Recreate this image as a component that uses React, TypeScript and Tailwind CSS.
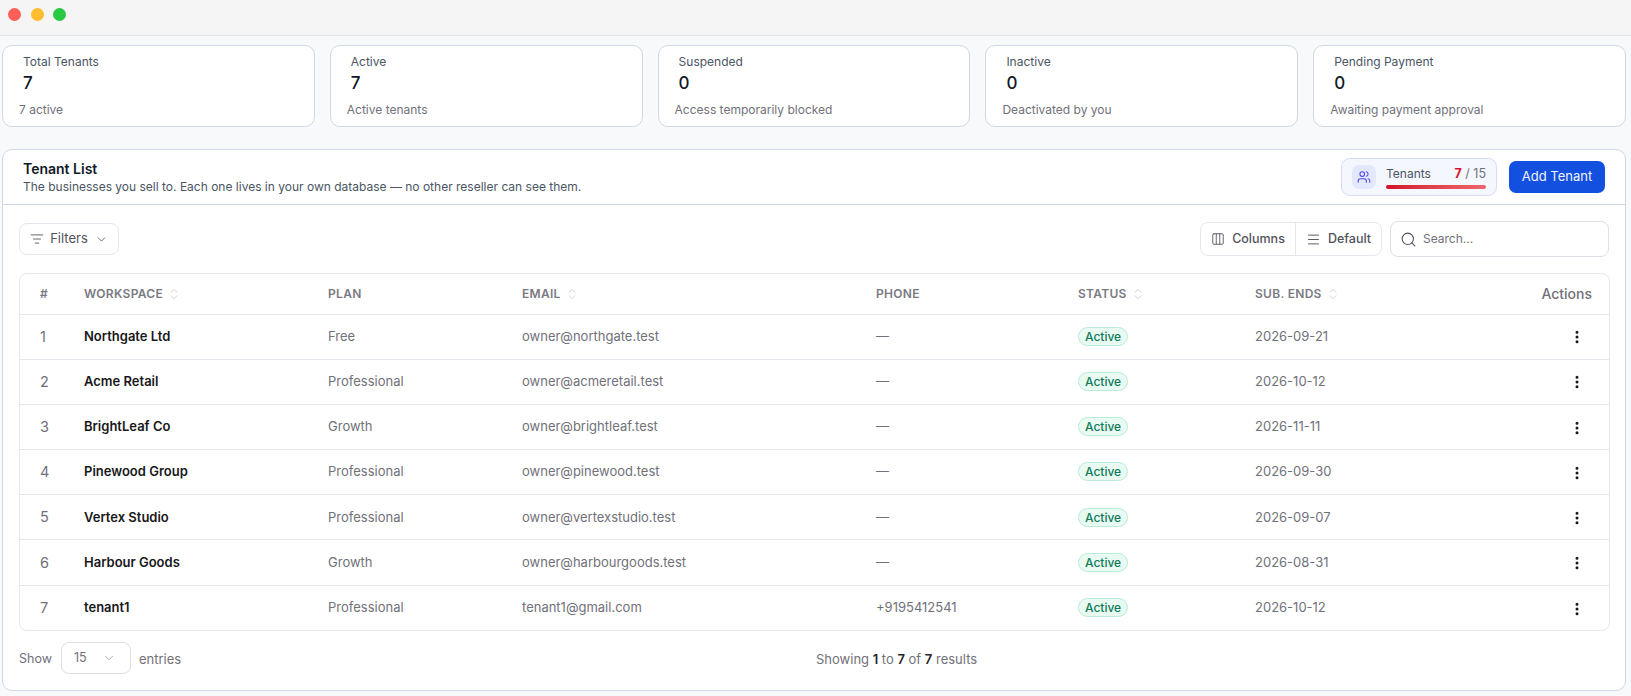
import { ChevronDown, ChevronsUpDown, Columns3, EllipsisVertical, ListFilter, Menu, Search, Users } from 'lucide-react'

const stats = [
  { title: 'Total Tenants', value: '7', note: '7 active' },
  { title: 'Active', value: '7', note: 'Active tenants' },
  { title: 'Suspended', value: '0', note: 'Access temporarily blocked' },
  { title: 'Inactive', value: '0', note: 'Deactivated by you' },
  { title: 'Pending Payment', value: '0', note: 'Awaiting payment approval' },
]

const tenants = [
  { name: 'Northgate Ltd', plan: 'Free', email: 'owner@northgate.test', phone: '—', ends: '2026-09-21' },
  { name: 'Acme Retail', plan: 'Professional', email: 'owner@acmeretail.test', phone: '—', ends: '2026-10-12' },
  { name: 'BrightLeaf Co', plan: 'Growth', email: 'owner@brightleaf.test', phone: '—', ends: '2026-11-11' },
  { name: 'Pinewood Group', plan: 'Professional', email: 'owner@pinewood.test', phone: '—', ends: '2026-09-30' },
  { name: 'Vertex Studio', plan: 'Professional', email: 'owner@vertexstudio.test', phone: '—', ends: '2026-09-07' },
  { name: 'Harbour Goods', plan: 'Growth', email: 'owner@harbourgoods.test', phone: '—', ends: '2026-08-31' },
  { name: 'tenant1', plan: 'Professional', email: 'tenant1@gmail.com', phone: '+9195412541', ends: '2026-10-12' },
]

function HeadCell({ label, sortable }: { label: string; sortable?: boolean }) {
  return (
    <th className="p-0 text-left font-semibold">
      <span className="flex items-center gap-[4px] text-[12px] tracking-[0.3px] text-[#7a7a82]">
        {label}
        {sortable && <ChevronsUpDown className="w-[14px] h-[14px] text-[#c9ccd1]" strokeWidth={1.5} />}
      </span>
    </th>
  )
}

export default function App() {
  return (
    <div className="w-[1631px] h-[696px] overflow-hidden bg-[#f8f9fb] font-['Inter',sans-serif]">
      <div className="h-[36px] bg-[#f5f5f6] border-b border-[#dfe3e8] flex items-center gap-[9.5px] pl-[8px] pb-[7px]">
        <span className="w-[13px] h-[13px] rounded-full bg-[#ff5f57]"></span>
        <span className="w-[13px] h-[13px] rounded-full bg-[#febc2e]"></span>
        <span className="w-[13px] h-[13px] rounded-full bg-[#28c840]"></span>
      </div>

      <div className="pl-[2px] pr-[5px] pt-[9px]">
        <div className="grid grid-cols-5 gap-[15px]">
          {stats.map((s) => (
            <div key={s.title} className="h-[82px] bg-white border border-[#cfd8e6] rounded-[10px] pl-[16px] pt-[8px]">
              <div className="pl-[4px] text-[12px] leading-[16px] text-[#4b5563]">{s.title}</div>
              <div className="pl-[4px] mt-[2px] text-[17px] leading-[22px] font-medium text-[#111827]">{s.value}</div>
              <div className="mt-[8px] text-[12px] leading-[16px] text-[#71717a]">{s.note}</div>
            </div>
          ))}
        </div>

        <div className="mt-[22px] h-[542px] bg-white border border-[#cfd8e6] rounded-[10px]">
          <div className="h-[55px] border-b border-[#cfd8e6] flex items-center justify-between pl-[20px] pr-[20px]">
            <div>
              <div className="text-[14px] leading-[18px] font-semibold text-[#111827]">Tenant List</div>
              <div className="mt-[2px] text-[12px] leading-[14px] text-[#4b5563]">
                The businesses you sell to. Each one lives in your own database — no other reseller can see them.
              </div>
            </div>
            <div className="flex items-center gap-[12px]">
              <div className="w-[156px] h-[38px] bg-[#f5f7ff] border border-[#d5ddf5] rounded-[9px] flex items-center pl-[10px]">
                <span className="w-[24px] h-[24px] rounded-[7px] bg-[#e3e7ff] flex items-center justify-center">
                  <Users className="w-[14px] h-[14px] text-[#4f46e5]" strokeWidth={1.75} />
                </span>
                <div className="ml-[10px] w-[100px]">
                  <div className="flex justify-between text-[12px] leading-[15px] text-[#4b5563]">
                    <span>Tenants</span>
                    <span className="text-[12.5px]">
                      <span className="font-bold text-[#d9122f]">7</span>
                      <span className="text-[#71717a]"> / 15</span>
                    </span>
                  </div>
                  <div className="mt-[4px] h-[4px] rounded-full bg-gradient-to-r from-[#d01029] to-[#f0646e]"></div>
                </div>
              </div>
              <button className="w-[96px] h-[32px] rounded-[7px] bg-[#1450e0] text-[#f0f4ff] text-[13px] font-normal">Add Tenant</button>
            </div>
          </div>

          <div className="pl-[16px] pr-[15px]">
            <div className="h-[68px] flex items-center justify-between">
              <button className="w-[100px] h-[32px] rounded-[8px] border border-[#e4e7ec] flex items-center justify-center gap-[6px] text-[13px] text-[#52525b]">
                <ListFilter className="w-[14px] h-[14px]" strokeWidth={1.5} />
                Filters
                <ChevronDown className="w-[13px] h-[13px] ml-[1px]" strokeWidth={1.5} />
              </button>
              <div className="mr-[1px] flex items-center gap-[8px]">
                <div className="h-[34px] rounded-[8px] border border-[#e4e7ec] flex items-center text-[12.5px] font-medium text-[#52525b]">
                  <span className="h-full w-[95px] border-r border-[#e4e7ec] flex items-center justify-center gap-[7px]">
                    <Columns3 className="w-[14px] h-[14px]" strokeWidth={1.5} />
                    Columns
                  </span>
                  <span className="h-full w-[85px] flex items-center justify-center gap-[7px]">
                    <Menu className="w-[15px] h-[15px]" strokeWidth={1.5} />
                    Default
                  </span>
                </div>
                <div className="w-[219px] h-[36px] rounded-[8px] border border-[#dcdfe4] flex items-center gap-[6px] pl-[9px] text-[12px] text-[#71717a]">
                  <Search className="w-[17px] h-[17px] text-[#52525b]" strokeWidth={1.5} />
                  Search...
                </div>
              </div>
            </div>

            <div className="border border-[#e4e7ec] rounded-[8px] overflow-hidden">
              <table className="table-fixed w-full border-collapse">
                <colgroup>
                  <col className="w-[64px]" />
                  <col className="w-[244px]" />
                  <col className="w-[194px]" />
                  <col className="w-[354px]" />
                  <col className="w-[202px]" />
                  <col className="w-[177px]" />
                  <col />
                </colgroup>
                <thead>
                  <tr className="h-[40px]">
                    <th className="p-0 pl-[20px] text-left text-[12px] font-semibold text-[#7a7a82]">#</th>
                    <HeadCell label="WORKSPACE" sortable />
                    <HeadCell label="PLAN" />
                    <HeadCell label="EMAIL" sortable />
                    <HeadCell label="PHONE" />
                    <HeadCell label="STATUS" sortable />
                    <HeadCell label="SUB. ENDS" sortable />
                    <th className="p-0 pr-[17px] text-right text-[14px] font-medium text-[#71717a]">Actions</th>
                  </tr>
                </thead>
                <tbody>
                  {tenants.map((t, i) => (
                    <tr key={t.name} className="h-[45.2px] border-t border-[#e4e7ec] text-[13px] text-[#71717a]">
                      <td className="pl-[20px] text-[14.5px]">{i + 1}</td>
                      <td className="font-semibold text-[#18181b]">{t.name}</td>
                      <td>{t.plan}</td>
                      <td>{t.email}</td>
                      <td>{t.phone}</td>
                      <td>
                        <span className="inline-block h-[19px] px-[6px] rounded-full border border-[#b9ecd8] bg-[#e9faf3] text-[12px] leading-[17px] font-medium text-[#0f7a5a]">Active</span>
                      </td>
                      <td>{t.ends}</td>
                      <td className="pr-[24px] text-right">
                        <EllipsisVertical className="inline-block w-[16px] h-[16px] text-[#18181b]" strokeWidth={2.5} />
                      </td>
                    </tr>
                  ))}
                </tbody>
              </table>
            </div>

            <div className="relative mt-[11px] flex items-center text-[12.5px] text-[#71717a]">
              <span className="pt-[2px]">Show</span>
              <span className="ml-[9px] w-[70px] h-[32px] rounded-[8px] border border-[#dcdfe4] flex items-center justify-between pl-[12px] pr-[14px]">
                15
                <ChevronDown className="w-[14px] h-[14px] text-[#a1a1aa]" strokeWidth={1.5} />
              </span>
              <span className="ml-[8px] pt-[2px] text-[13px]">entries</span>
              <span className="absolute left-[797px] pt-[2px] text-[13px]">
                Showing <b className="font-semibold text-[#27272a]">1</b> to <b className="font-semibold text-[#27272a]">7</b> of <b className="font-semibold text-[#27272a]">7</b> results
              </span>
            </div>
          </div>
        </div>
      </div>
    </div>
  )
}
